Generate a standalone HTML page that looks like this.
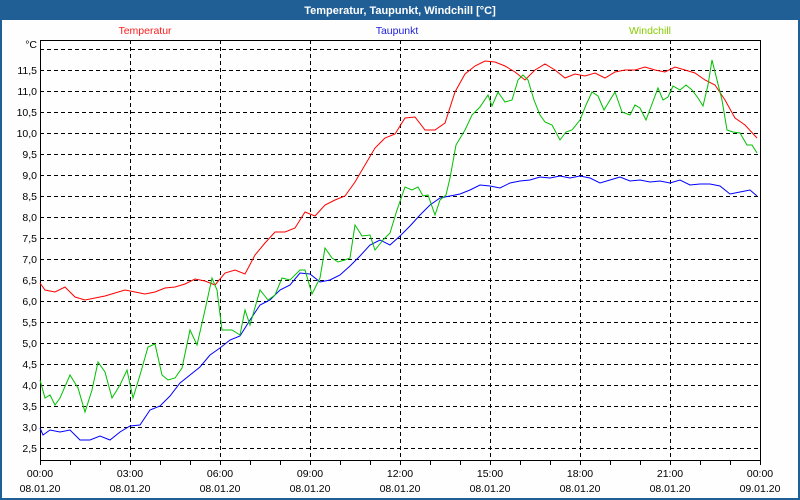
<!DOCTYPE html>
<html><head><meta charset="utf-8"><style>
html,body{margin:0;padding:0;background:#fff;}
svg{display:block;font-family:"Liberation Sans",Tahoma,sans-serif;}
</style></head><body>
<svg width="800" height="500" viewBox="0 0 800 500" xmlns="http://www.w3.org/2000/svg">
<rect x="0" y="0" width="800" height="500" fill="#1f5f96"/>
<rect x="2" y="20" width="796" height="478" fill="#fdfefd"/>
<text x="400" y="14" fill="#fff" font-size="11" font-weight="bold" text-anchor="middle">Temperatur, Taupunkt, Windchill [°C]</text>
<text x="145" y="34" fill="#ff2020" font-size="10.5" text-anchor="middle">Temperatur</text>
<text x="397" y="34" fill="#2020dd" font-size="10.5" text-anchor="middle">Taupunkt</text>
<text x="650" y="34" fill="#88cc00" font-size="10.5" text-anchor="middle">Windchill</text>
<g stroke="#000" stroke-width="1" stroke-dasharray="4,3" shape-rendering="crispEdges">
<path d="M40 49.5H760M40 70.5H760M40 91.5H760M40 112.5H760M40 133.5H760M40 154.5H760M40 175.5H760M40 196.5H760M40 217.5H760M40 238.5H760M40 259.5H760M40 280.5H760M40 301.5H760M40 322.5H760M40 343.5H760M40 364.5H760M40 385.5H760M40 406.5H760M40 427.5H760M40 448.5H760"/>
<path d="M130.5 40V460M220.5 40V460M310.5 40V460M400.5 40V460M490.5 40V460M580.5 40V460M670.5 40V460"/>
</g>
<g stroke="#000" shape-rendering="crispEdges" fill="none">
<rect x="40.5" y="40.5" width="720" height="420"/>
<path d="M70.5 460v5M100.5 460v5M130.5 460v5M160.5 460v5M190.5 460v5M220.5 460v5M250.5 460v5M280.5 460v5M310.5 460v5M340.5 460v5M370.5 460v5M400.5 460v5M430.5 460v5M460.5 460v5M490.5 460v5M520.5 460v5M550.5 460v5M580.5 460v5M610.5 460v5M640.5 460v5M670.5 460v5M700.5 460v5M730.5 460v5M40.5 460v5M760.5 460v5"/>
</g>
<g font-size="10.5" fill="#000" text-anchor="end">
<text x="37" y="48">°C</text>
<text x="37" y="74">11,5</text><text x="37" y="95">11,0</text><text x="37" y="116">10,5</text><text x="37" y="137">10,0</text>
<text x="37" y="158">9,5</text><text x="37" y="179">9,0</text><text x="37" y="200">8,5</text><text x="37" y="221">8,0</text>
<text x="37" y="242">7,5</text><text x="37" y="263">7,0</text><text x="37" y="284">6,5</text><text x="37" y="305">6,0</text>
<text x="37" y="326">5,5</text><text x="37" y="347">5,0</text><text x="37" y="368">4,5</text><text x="37" y="389">4,0</text>
<text x="37" y="410">3,5</text><text x="37" y="431">3,0</text><text x="37" y="452">2,5</text>
</g>
<g font-size="10.5" fill="#000" text-anchor="middle">
<text x="40" y="477">00:00</text><text x="130" y="477">03:00</text><text x="220" y="477">06:00</text><text x="310" y="477">09:00</text>
<text x="400" y="477">12:00</text><text x="490" y="477">15:00</text><text x="580" y="477">18:00</text><text x="670" y="477">21:00</text><text x="760" y="477">00:00</text>
<text x="40" y="492">08.01.20</text><text x="130" y="492">08.01.20</text><text x="220" y="492">08.01.20</text><text x="310" y="492">08.01.20</text>
<text x="400" y="492">08.01.20</text><text x="490" y="492">08.01.20</text><text x="580" y="492">08.01.20</text><text x="670" y="492">08.01.20</text><text x="760" y="492">09.01.20</text>
</g>
<g fill="none" stroke-width="1">
<polyline stroke="#ff0000" points="40,283 45,290 55,292 65,287 75,297 85,300 95,298 105,296 115,293 125,290 135,292 145,294 155,292 165,288 175,287 185,284 195,279 205,281 215,285 225,273 235,270 245,274 255,255 265,243 275,232 285,232 295,228 305,212 315,216 325,205 335,200 345,196 355,182 365,165 375,148 385,138 395,134 405,118 415,117 425,130 435,130 445,123 455,92 465,74 475,66 485,61 495,62 505,66 515,72 525,80 535,70 545,64 555,70 565,78 575,74 585,76 595,73 605,78 615,72 625,70 635,70 645,67 655,70 665,72 675,67 685,70 695,73 705,80 715,85 725,100 735,118 745,125 757,138"/>
<polyline stroke="#0000ff" points="40,428 43,435 50,430 60,432 70,430 80,440 90,440 100,436 110,440 120,432 130,426 140,425 150,410 160,406 170,396 180,383 190,375 200,367 210,355 220,348 230,340 240,336 250,320 260,305 270,300 280,290 290,285 300,273 310,274 320,282 330,280 340,275 350,266 360,256 370,245 380,240 390,245 400,236 410,226 420,215 430,205 440,198 450,196 460,194 470,190 480,185 490,186 500,188 510,183 520,181 530,180 540,177 550,178 560,176 570,178 580,176 590,178 600,183 610,180 620,177 630,181 640,180 650,182 660,181 670,183 680,180 690,185 700,184 710,184 720,186 730,194 740,192 750,190 757,196"/>
<polyline stroke="#00c000" points="40,380 45,398 50,395 55,405 60,398 70,375 78,388 85,412 92,390 98,362 105,372 112,398 120,385 127,370 133,398 140,375 148,347 155,344 162,375 168,380 175,378 182,368 190,330 197,345 205,310 212,278 217,290 222,330 232,330 240,335 245,310 250,325 260,290 268,300 275,295 282,278 290,280 300,270 305,270 312,294 320,278 325,248 332,258 338,262 345,260 350,258 355,225 362,236 370,235 375,250 383,240 390,233 397,210 405,187 412,190 418,187 423,196 428,195 435,215 440,200 446,195 450,178 456,145 465,130 472,115 480,107 488,95 492,106 498,92 505,102 512,100 518,80 523,75 528,80 534,100 540,115 545,122 552,125 560,140 566,132 572,130 580,120 586,105 592,92 598,96 604,110 610,100 615,92 622,112 630,115 635,105 640,108 646,120 652,104 658,88 663,100 668,97 673,86 680,90 686,85 692,90 698,98 703,106 708,85 712,60 717,80 722,100 727,130 733,132 740,133 747,145 752,145 757,153"/>
</g>
</svg>
</body></html>
